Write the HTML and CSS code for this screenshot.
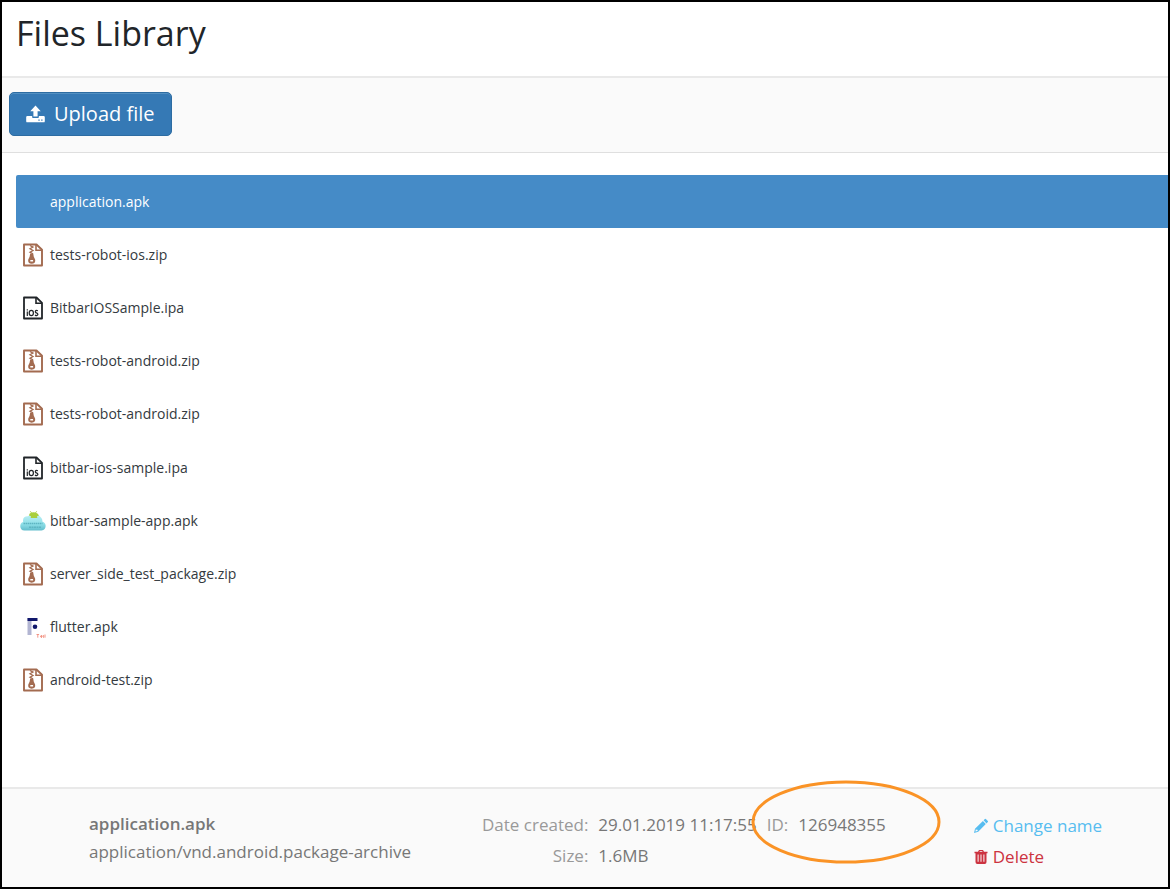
FILE: index.html
```html
<!DOCTYPE html>
<html lang="en">
<head>
<meta charset="utf-8">
<meta name="viewport" content="width=device-width, initial-scale=1">
<title>Files Library</title>
<link rel="stylesheet" href="styles.css">
</head>
<body>
<svg class="sprite" aria-hidden="true">
  <symbol id="zip" viewBox="0 0 20 24">
    <path d="M1 1.500h12.500L19 6.800V22.500H1z" fill="none" stroke="currentColor" stroke-width="1.900" stroke-linejoin="round"/>
    <path d="M13 1.500v5.800h6" fill="none" stroke="currentColor" stroke-width="1.600"/>
    <path d="M7 2.500l3 1.600-3 1.700 3 1.700-3 1.700 3 1.600" fill="none" stroke="currentColor" stroke-width="1.300"/>
    <path fill-rule="evenodd" d="M7.200 10.500h3l.6 3.300 1.300 2.700q.8 4-3.400 4.200-4.200-.2-3.400-4.200l1.300-2.700zM7.300 17v1.600h2.800V17z" fill="currentColor"/>
  </symbol>
  <symbol id="ios" viewBox="0 0 20 24">
    <path d="M1 1.500h12.500L19 6.800V22.500H1z" fill="none" stroke="currentColor" stroke-width="1.800" stroke-linejoin="round"/>
    <path d="M13 1.500v5.800h6" fill="none" stroke="currentColor" stroke-width="1.600"/>
    <path d="M4.300 15.500v4.500M4.300 13.300v1.200M14.900 14.800c-2.800-1.200-3.400 1.400-1.500 2.100 2.500.9 1.700 3.600-1.500 2.200" fill="none" stroke="currentColor" stroke-width="1.200"/>
    <ellipse cx="8.300" cy="17" rx="2.100" ry="2.700" fill="none" stroke="currentColor" stroke-width="1.200"/>
  </symbol>
</svg>
<div class="app">
  <header class="title-bar"><h1 class="title">Files Library</h1></header>
  <div class="toolbar">
    <button class="upload" type="button">
      <svg class="upload-icon" viewBox="0 0 20 18" aria-hidden="true"><path fill="currentColor" d="M10 0l5.500 6h-3.300v5.500H7.800V6H4.500z"/><path fill="currentColor" fill-rule="evenodd" d="M1.500 11h5v1.500q0 .8.800.8h5.400q.8 0 .8-.8V11h5q1.300 0 1.300 1.300v4.200q0 1.300-1.300 1.300h-17Q.2 17.800.2 16.500v-4.200Q.2 11 1.500 11zM13 14.800v1.400h1.400v-1.400zm3 0v1.400h1.400v-1.400z"/></svg>
      Upload file
    </button>
  </div>
  <main class="content">
    <ul class="files">
      <li class="file selected"><span class="icon"></span>application.apk</li>
      <li class="file"><svg class="icon zip"><use href="#zip"/></svg>tests-robot-ios.zip</li>
      <li class="file"><svg class="icon"><use href="#ios"/></svg>BitbarIOSSample.ipa</li>
      <li class="file"><svg class="icon zip"><use href="#zip"/></svg>tests-robot-android.zip</li>
      <li class="file"><svg class="icon zip"><use href="#zip"/></svg>tests-robot-android.zip</li>
      <li class="file"><svg class="icon"><use href="#ios"/></svg>bitbar-ios-sample.ipa</li>
      <li class="file">
        <svg class="icon" viewBox="0 0 26 24" aria-hidden="true">
          <defs><linearGradient id="cloud" x2="0" y2="1"><stop stop-color="#c0f0f5"/><stop offset=".6" stop-color="#8fe0e8"/><stop offset="1" stop-color="#62bdcc"/></linearGradient></defs>
          <path d="M4.500 21.500C-.8 21.500-1 14 3.200 13 2.200 9 5 7 8 7.300 11 4.300 18 4 20.500 8c1.800 1.800 2 3 1.800 4.500 4.500 1 4.700 8.800-.8 9z" fill="url(#cloud)"/>
          <path d="M9 6.500Q9 4.200 11 3.800L9.800 2.200l.5-.3 1.500 1.600q1.700-.5 3.400 0l1.500-1.600.5.300L16 3.800q2 .4 3 2.700l-2 .8.300 1.700H10.700L11 7.300z" fill="#a9cf3c"/>
          <path d="M3.500 14.500h19" stroke="#5db5c2" stroke-width="1.600" stroke-dasharray="1.500 .5"/>
          <path d="M9 18.300h12" stroke="#5fb6c3" stroke-width="1.400" stroke-dasharray="2 .5"/>
        </svg>bitbar-sample-app.apk</li>
      <li class="file"><svg class="icon zip"><use href="#zip"/></svg>server_side_test_package.zip</li>
      <li class="file">
        <svg class="icon" viewBox="0 0 26 24" aria-hidden="true">
          <path d="M7.500 3h4v17h-4z" fill="#b2b5d2"/><path d="M7.500 3h10v3h-10z" fill="#10176b"/><circle cx="15" cy="11.800" r="2.300" fill="#10176b"/>
          <path d="M16.500 19.500h2.600M17.800 19.500v3.200M20.500 21.500h1.800q-.3-1.500-1.300-1-.9.900 0 1.800l1 .2M24 20.300l-.9.600.9 1-.9.800M25 19.500v3.200" fill="none" stroke="#f28b7b" stroke-width=".9"/>
        </svg>flutter.apk</li>
      <li class="file"><svg class="icon zip"><use href="#zip"/></svg>android-test.zip</li>
    </ul>
  </main>
  <footer class="details">
    <div class="summary">
      <strong class="name">application.apk</strong>
      <span>application/vnd.android.package-archive</span>
    </div>
    <dl class="meta">
      <dt>Date created:</dt><dd>29.01.2019 11:17:55</dd>
      <dt>Size:</dt><dd>1.6MB</dd>
    </dl>
    <div class="file-id">
      <dl class="meta"><dt>ID:</dt><dd>126948355</dd></dl>
      <svg class="ring" viewBox="0 0 190 84" aria-hidden="true"><ellipse cx="95" cy="42" rx="93" ry="40" fill="none" stroke="#fa9326" stroke-width="3"/></svg>
    </div>
    <div class="actions">
      <a class="action rename" href="#rename"><svg class="action-icon" viewBox="0 0 14 16" aria-hidden="true"><path fill="currentColor" fill-rule="evenodd" d="M9.600 2.200l1.300-1.100q.6-.5 1.200.1l1.700 1.700q.5.600 0 1.200l-1.300 1.300zM8.900 3l2.900 3.100-7.600 7.700L0 15l1-4.200zM1.900 11.300l-.5 2.200 2.200-.5v-1.200H2.500z"/></svg>Change name</a>
      <a class="action delete" href="#delete"><svg class="action-icon" viewBox="0 0 14 16" aria-hidden="true"><path fill="currentColor" fill-rule="evenodd" d="M4 2.800L5 1h4l1 1.800h3.500v1.400h-1V13q0 2-1.800 2H3.300q-1.800 0-1.800-2V4.200h-1V2.800zm1.500 0h3L8.200 2H5.800zM3.600 5.500v7.200h1V5.500zm2.900 0v7.200h1V5.500zm2.900 0v7.200h1V5.500z"/></svg>Delete</a>
    </div>
  </footer>
</div>
</body>
</html>
```
FILE: styles.css
```css
* { box-sizing: border-box; }
body { margin: 0; font-family: "Open Sans", "Noto Sans", sans-serif; color: #212529; background: #fff; }
.sprite { position: absolute; width: 0; height: 0; }
.app { min-height: 100vh; display: flex; flex-direction: column; border: 2px solid #000; }
.title-bar { padding: 8px 14px 20px; border-bottom: 2px solid #e9e9e9; }
.title { margin: 0; font-size: 34px; line-height: 46px; font-weight: 400; }
.toolbar { padding: 14px 7px 16px; background: #fafafa; border-bottom: 1px solid #dfdfdf; }
.upload { display: flex; align-items: center; gap: 9px; height: 44px; padding: 0 16px; border: 1px solid #2d6ca2; border-radius: 5px; background: #3579b5; box-shadow: inset 0 1px 0 #5390c2; color: #fff; font: 20px/28px "Open Sans", "Noto Sans", sans-serif; }
.upload-icon { width: 19px; height: 18px; }
.content { flex: 1; padding: 22px 0 0 14px; }
.files { display: grid; grid-auto-rows: 1fr; min-height: 532px; margin: 0; padding: 0; list-style: none; }
.file { display: flex; align-items: center; gap: 4px; padding-left: 4px; font-size: 14px; line-height: 20px; color: #343a40; }
.selected { background: #458bc7; color: #fff; border-radius: 2px 0 0 2px; }
.icon { width: 26px; height: 24px; color: #212529; }
.zip { color: #a36b50; }
.details { display: flex; padding: 21px 0 15px 87px; background: #fafafa; border-top: 2px solid #e9e9e9; font-size: 17px; line-height: 28px; color: #777; }
.summary { flex: 0 1 393px; display: flex; flex-direction: column; }
.name { font-weight: 600; }
.meta { display: grid; grid-template-columns: auto auto; grid-auto-rows: 31px; column-gap: 10px; align-content: start; margin: 0; line-height: 30px; }
.meta dt { text-align: right; color: #999; }
.meta dd { margin: 0; white-space: nowrap; }
.file-id { position: relative; margin-left: 10px; }
.ring { position: absolute; left: -16px; top: -30px; width: 190px; height: 84px; pointer-events: none; }
.actions { display: flex; flex-direction: column; margin-left: 88px; line-height: 31px; }
.action { display: flex; align-items: center; gap: 5px; text-decoration: none; white-space: nowrap; }
.action-icon { width: 14px; height: 16px; }
.rename { color: #57bdf0; }
.delete { color: #cc3340; }
```
